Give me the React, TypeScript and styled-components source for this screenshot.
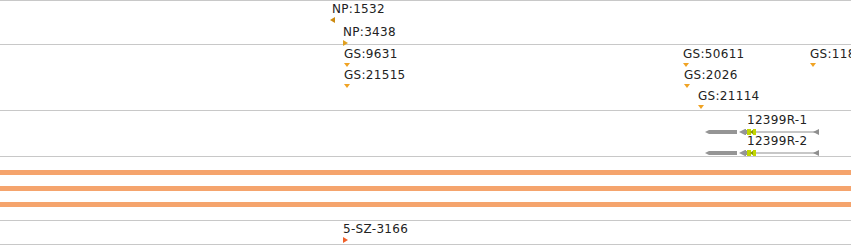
import React from 'react';
import styled, { createGlobalStyle } from 'styled-components';

const GlobalStyle = createGlobalStyle`
  html, body {
    margin: 0;
    padding: 0;
    background: #ffffff;
  }
  body {
    font-family: "DejaVu Sans", Verdana, sans-serif;
  }
`;

type Dir = 'left' | 'right' | 'down';

interface Feature {
  label: string;
  x: number;
  y: number; // cap top of label, relative to track
  dir: Dir;
  color: string;
}

const Browser = styled.div`
  width: 851px;
  border-top: 1px solid #c8c8c8;
  overflow: hidden;
`;

const Track = styled.div<{ $height: number }>`
  position: relative;
  height: ${p => p.$height}px;
  border-bottom: 1px solid #c8c8c8;
  box-sizing: content-box;
`;

const FeatureBox = styled.div`
  position: absolute;
  display: flex;
  flex-direction: column;
  align-items: flex-start;
  white-space: nowrap;
`;

const Label = styled.span`
  font-size: 12px;
  line-height: 12px;
  color: #222222;
  letter-spacing: 0.3px;
`;

const Marker = styled.span<{ $dir: Dir; $color: string }>`
  width: 0;
  height: 0;
  margin-top: ${p => (p.$dir === 'down' ? 3 : 2)}px;
  margin-left: ${p => (p.$dir === 'left' ? -1 : 0)}px;
  ${p =>
    p.$dir === 'down'
      ? `border-left: 3px solid transparent;
         border-right: 3px solid transparent;
         border-top: 4px solid ${p.$color};`
      : p.$dir === 'left'
      ? `border-top: 3px solid transparent;
         border-bottom: 3px solid transparent;
         border-right: 5px solid ${p.$color};`
      : `border-top: 3px solid transparent;
         border-bottom: 3px solid transparent;
         border-left: 5px solid ${p.$color};`}
`;

const BarStack = styled.div`
  display: flex;
  flex-direction: column;
  gap: 11px;
  padding-top: 13px;
`;

const Bar = styled.div`
  height: 5px;
  background: #f5a46d;
`;

const GeneRow = styled.div`
  position: absolute;
  left: 703px;
  display: flex;
  flex-direction: column;
  align-items: flex-start;
`;

const GeneLabel = styled(Label)`
  margin-left: 44px;
`;

const GeneSvg = styled.svg`
  display: block;
  margin-top: 3px;
`;

const GOLD = '#f0a324';
const DARK_GOLD = '#cc8a10';

const topFeatures: Feature[] = [
  { label: 'NP:1532', x: 331, y: 3, dir: 'left', color: DARK_GOLD },
  { label: 'NP:3438', x: 343, y: 26, dir: 'right', color: '#e0a020' },
];

const gsFeatures: Feature[] = [
  { label: 'GS:9631', x: 344, y: 4, dir: 'down', color: GOLD },
  { label: 'GS:21515', x: 344, y: 25, dir: 'down', color: GOLD },
  { label: 'GS:50611', x: 683, y: 4, dir: 'down', color: GOLD },
  { label: 'GS:118', x: 810, y: 4, dir: 'down', color: GOLD },
  { label: 'GS:2026', x: 684, y: 25, dir: 'down', color: GOLD },
  { label: 'GS:21114', x: 698, y: 46, dir: 'down', color: GOLD },
];

const bottomFeatures: Feature[] = [
  { label: '5-SZ-3166', x: 343, y: 3, dir: 'right', color: '#f0602a' },
];

const FeatureMark: React.FC<{ f: Feature }> = ({ f }) => (
  <FeatureBox style={{ left: f.x, top: f.y - 1 }}>
    <Label style={{ marginLeft: f.dir === 'left' ? 1 : 0 }}>{f.label}</Label>
    <Marker $dir={f.dir} $color={f.color} />
  </FeatureBox>
);

const Gene: React.FC<{ label: string; top: number }> = ({ label, top }) => (
  <GeneRow style={{ top }}>
    <GeneLabel>{label}</GeneLabel>
    <GeneSvg width="120" height="6" viewBox="0 0 120 6">
      {/* intron line */}
      <line x1="52" y1="3" x2="114" y2="3" stroke="#8f8f8f" strokeWidth="1" />
      {/* end arrow */}
      <polygon points="110,3 116,0 116,6" fill="#8f8f8f" />
      {/* left exon with strand arrow */}
      <polygon points="2,3 6,1 34,1 34,5 6,5" fill="#959595" />
      <polygon points="36,3 42,0 43,0 43,6 42,6" fill="#959595" />
      <rect x="43" y="1" width="2" height="4" fill="#959595" />
      {/* coding part */}
      <rect x="44" y="0" width="4" height="6" fill="#c2d600" />
      <polygon points="47,3 51,0 51,6" fill="#8a9a00" />
      <rect x="50" y="0" width="3" height="6" fill="#c2d600" />
    </GeneSvg>
  </GeneRow>
);

export default function App() {
  return (
    <>
      <GlobalStyle />
      <Browser>
        <Track $height={43}>
          {topFeatures.map(f => (
            <FeatureMark key={f.label} f={f} />
          ))}
        </Track>
        <Track $height={65}>
          {gsFeatures.map(f => (
            <FeatureMark key={f.label} f={f} />
          ))}
        </Track>
        <Track $height={45}>
          <Gene label="12399R-1" top={3} />
          <Gene label="12399R-2" top={24} />
        </Track>
        <Track $height={63}>
          <BarStack>
            <Bar />
            <Bar />
            <Bar />
          </BarStack>
        </Track>
        <Track $height={23}>
          {bottomFeatures.map(f => (
            <FeatureMark key={f.label} f={f} />
          ))}
        </Track>
      </Browser>
    </>
  );
}
